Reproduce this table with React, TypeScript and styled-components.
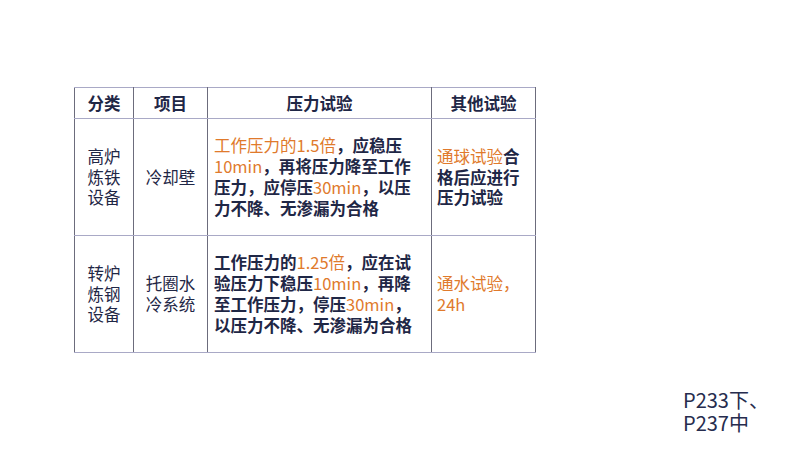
import React from "react";
import styled, { createGlobalStyle } from "styled-components";

const Global = createGlobalStyle`
  html, body { margin: 0; padding: 0; background: #ffffff; }
  body { font-family: "Noto Sans CJK SC", "Noto Sans", sans-serif; }
`;

const Page = styled.div`
  width: 800px;
  height: 450px;
  box-sizing: border-box;
  padding: 87px 0 0 74px;
  display: flex;
  flex-direction: column;
  background: #ffffff;
`;

const Table = styled.table`
  border-collapse: collapse;
  table-layout: fixed;
  width: 461px;
  color: #1f2746;
  font-size: 16.5px;
`;

const Cell = styled.td<{ $w?: number; $align?: string; $bold?: boolean; $pad?: number }>`
  ${(p) => (p.$w ? `width: ${p.$w}px;` : "")}
  border-top: 1px solid #a9a9c6;
  border-bottom: 1px solid #a9a9c6;
  border-left: 1px solid #6c6c7c;
  border-right: 1px solid #6c6c7c;
  padding: 0 0 0 ${(p) => p.$pad ?? 0}px;
  text-align: ${(p) => p.$align ?? "center"};
  vertical-align: middle;
  font-weight: ${(p) => (p.$bold ? 700 : 400)};
  line-height: 20.8px;
  box-sizing: border-box;
  white-space: nowrap;
`;

const HeadRow = styled.tr`
  height: 31px;
`;

const BodyRow = styled.tr`
  height: 117px;
`;

const Hi = styled.span`
  color: #e07a2c;
  font-weight: 400;
`;

const Line = styled.div`
  white-space: nowrap;
`;

const Note = styled.div`
  margin: 35px 0 0 609px;
  font-size: 20px;
  line-height: 23px;
  color: #262c4e;
`;

export default function App() {
  return (
    <>
      <Global />
      <Page>
        <Table>
          <tbody>
            <HeadRow>
              <Cell as="th" $w={59} $bold>分类</Cell>
              <Cell as="th" $w={74} $bold>项目</Cell>
              <Cell as="th" $w={224} $bold>压力试验</Cell>
              <Cell as="th" $w={104} $bold>其他试验</Cell>
            </HeadRow>
            <BodyRow>
              <Cell>
                <Line>高炉</Line>
                <Line>炼铁</Line>
                <Line>设备</Line>
              </Cell>
              <Cell>冷却壁</Cell>
              <Cell $align="left" $pad={6} $bold>
                <Line><Hi>工作压力的1.5倍</Hi>，应稳压</Line>
                <Line><Hi>10min</Hi>，再将压力降至工作</Line>
                <Line>压力，应停压<Hi>30min</Hi>，以压</Line>
                <Line>力不降、无渗漏为合格</Line>
              </Cell>
              <Cell $align="left" $pad={5} $bold>
                <Line><Hi>通球试验</Hi>合</Line>
                <Line>格后应进行</Line>
                <Line>压力试验</Line>
              </Cell>
            </BodyRow>
            <BodyRow>
              <Cell>
                <Line>转炉</Line>
                <Line>炼钢</Line>
                <Line>设备</Line>
              </Cell>
              <Cell>
                <Line>托圈水</Line>
                <Line>冷系统</Line>
              </Cell>
              <Cell $align="left" $pad={6} $bold>
                <Line>工作压力的<Hi>1.25倍</Hi>，应在试</Line>
                <Line>验压力下稳压<Hi>10min</Hi>，再降</Line>
                <Line>至工作压力，停压<Hi>30min</Hi>，</Line>
                <Line>以压力不降、无渗漏为合格</Line>
              </Cell>
              <Cell $align="left" $pad={5}>
                <Line><Hi>通水试验，</Hi></Line>
                <Line><Hi>24h</Hi></Line>
              </Cell>
            </BodyRow>
          </tbody>
        </Table>
        <Note>
          <div>P233下、</div>
          <div>P237中</div>
        </Note>
      </Page>
    </>
  );
}
